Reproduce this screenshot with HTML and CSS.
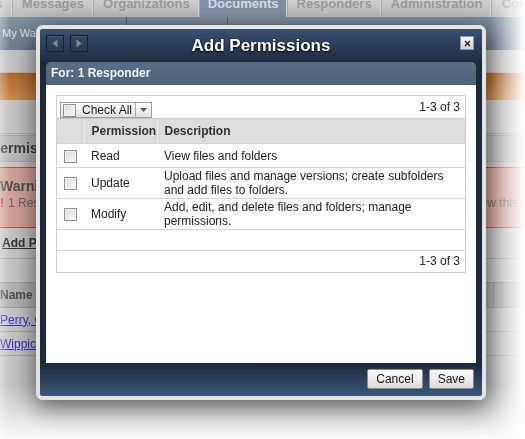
FILE: index.html
```html
<!DOCTYPE html>
<html lang="en">

<head>
    <meta charset="UTF-8" />
    <meta name="viewport" content="width=device-width, initial-scale=1.0" />
    <title>Add Permissions</title>
    <link rel="stylesheet" href="styles.css">
</head>

<body>
    <div class="screen">
        <!-- page behind the modal -->
        <div class="page">
            <div class="tabs">
                <span class="tab tab-first">Alerts</span>
                <span class="tab">Messages</span>
                <span class="tab">Organizations</span>
                <span class="tab tab-active">Documents</span>
                <span class="tab">Responders</span>
                <span class="tab">Administration</span>
                <span class="tab">Contacts</span>
            </div>
            <div class="subnav">
                <span class="subnav-item">My Watch List</span>
                <span class="subnav-item">Shared Folders</span>
                <span class="subnav-item"></span>
            </div>
            <div class="strip"></div>
            <div class="banner"></div>
            <div class="strip strip-tall"></div>
            <h2 class="section-title">Permissions</h2>
            <div class="warning">
                <p class="warning-title">Warning</p>
                <p class="warning-msg">
                    <span class="warning-icon">!</span>
                    <span class="warning-lead">1 Responder does not have permission to</span>
                    <span>view this folder.</span>
                </p>
            </div>
            <div class="add-row"><a class="add-link" href="#">Add Permissions</a></div>
            <table class="list">
                <tr>
                    <th class="list-name">Name</th>
                    <th></th>
                </tr>
                <tr>
                    <td><a href="#">Perry, Carol</a></td>
                    <td></td>
                </tr>
                <tr>
                    <td><a href="#">Wippich, Dan</a></td>
                    <td></td>
                </tr>
            </table>
        </div>

        <div class="shade"></div>

        <!-- modal -->
        <div class="dialog">
            <div class="dialog-frame">
                <div class="dialog-title">
                    <div class="nav-btns">
                        <button class="nav-btn" type="button">
                            <svg width="8" height="9" viewBox="0 0 8 9"><path d="M6.5 0.5 L1.5 4.5 L6.5 8.5 Z" fill="#7b8ca3" /></svg>
                        </button>
                        <button class="nav-btn" type="button">
                            <svg width="8" height="9" viewBox="0 0 8 9"><path d="M1.5 0.5 L6.5 4.5 L1.5 8.5 Z" fill="#7b8ca3" /></svg>
                        </button>
                    </div>
                    <h1>Add Permissions</h1>
                    <button class="close-btn" type="button">
                        <svg width="7" height="7" viewBox="0 0 7 7"><path d="M1 1 L6 6 M6 1 L1 6" stroke="#2b2b2b" stroke-width="1.5" /></svg>
                    </button>
                </div>

                <div class="panel">
                    <div class="panel-head">For: 1 Responder</div>
                    <div class="panel-body">
                        <div class="grid-box">
                            <div class="grid-toolbar">
                                <div class="check-all">
                                    <span class="cb"></span>
                                    <span class="check-all-label">Check All</span>
                                    <span class="check-all-menu">
                                        <svg width="7" height="4" viewBox="0 0 7 4"><path d="M0 0 H7 L3.5 4 Z" fill="#5a5a5a" /></svg>
                                    </span>
                                </div>
                                <span class="pager">1-3 of 3</span>
                            </div>
                            <table class="grid">
                                <thead>
                                    <tr>
                                        <th class="col-cb"></th>
                                        <th class="col-perm">Permission</th>
                                        <th>Description</th>
                                    </tr>
                                </thead>
                                <tbody>
                                    <tr>
                                        <td class="col-cb"><span class="cb"></span></td>
                                        <td>Read</td>
                                        <td>View files and folders</td>
                                    </tr>
                                    <tr>
                                        <td class="col-cb"><span class="cb"></span></td>
                                        <td>Update</td>
                                        <td>Upload files and manage versions; create subfolders and add files to folders.</td>
                                    </tr>
                                    <tr>
                                        <td class="col-cb"><span class="cb"></span></td>
                                        <td>Modify</td>
                                        <td>Add, edit, and delete files and folders; manage permissions.</td>
                                    </tr>
                                    <tr class="empty-row">
                                        <td colspan="3"></td>
                                    </tr>
                                </tbody>
                            </table>
                            <div class="grid-footer"><span class="pager">1-3 of 3</span></div>
                        </div>
                    </div>
                </div>

                <div class="dialog-footer">
                    <button class="btn" type="button">Cancel</button>
                    <button class="btn" type="button">Save</button>
                </div>
            </div>
        </div>
    </div>
</body>

</html>
```

FILE: styles.css
```css
* {
    box-sizing: border-box;
}

body {
    margin: 0;
    font-family: "Liberation Sans", Arial, sans-serif;
    font-size: 12px;
    color: #222;
    background: #fff;
    overflow: hidden;
}

p,
h1,
h2 {
    margin: 0;
}

.screen {
    position: relative;
    width: 525px;
    height: 439px;
    overflow: hidden;
}

/* ---- background page ---- */

.page {
    height: 100%;
    background: #c5c5c5;
    color: #555;
    filter: blur(0.4px);
}

.tabs {
    display: flex;
    height: 17px;
    overflow: hidden;
    background: linear-gradient(#d0d0d0, #bcbcbc);
}

.tab {
    flex: none;
    height: 26px;
    margin-top: -9px;
    padding: 0 9px;
    line-height: 26px;
    font-size: 13px;
    font-weight: bold;
    color: #9a9a9a;
    white-space: nowrap;
    border-right: 1px solid #a9a9a9;
    box-shadow: inset -1px 0 0 #dadada;
}

.tab-first {
    margin-left: -43px;
}

.tab-active {
    padding: 0 8px;
    background: #8190a3;
    color: #d5dbe2;
}

.subnav {
    display: flex;
    height: 33px;
    background: linear-gradient(#8290a2, #6f7c8e);
}

.subnav-item {
    width: 127px;
    padding: 10px 0 0 2px;
    font-size: 11px;
    color: #dfe3e8;
    white-space: nowrap;
    overflow: hidden;
    border-right: 1px solid #57636f;
}

.subnav-item + .subnav-item {
    width: 101px;
}

.subnav-item:last-child {
    flex: 1;
    border-right: none;
}

.strip {
    height: 23px;
    border-bottom: 1px solid #b2b2b2;
}

.strip-tall {
    height: 34px;
    border-bottom: 1px solid #a9a9a9;
}

.banner {
    height: 27px;
    background: linear-gradient(#b3672a, #c98b4e);
}

.section-title {
    height: 27px;
    margin-top: 1px;
    text-indent: -9px;
    line-height: 25px;
    font-size: 14px;
    color: #3c3c3c;
    background: #bababa;
    border-top: 1px solid #a8a8a8;
    border-bottom: 1px solid #a8a8a8;
}

.warning {
    height: 61px;
    margin-top: 5px;
    padding-top: 10px;
    background: #d1a399;
    border-top: 1px solid #c3483a;
    border-bottom: 1px solid #c3483a;
}

.warning-title {
    line-height: 17px;
    font-size: 14px;
    font-weight: bold;
    color: #4e4e4e;
}

.warning-msg {
    display: flex;
    line-height: 16px;
    color: #6a6a6a;
    white-space: nowrap;
}

.warning-msg span {
    flex: none;
}

.warning-icon {
    width: 8px;
    font-weight: bold;
    color: #d0321e;
}

.warning-lead {
    width: 464px;
}

.add-row {
    height: 31px;
    padding-left: 2px;
    line-height: 30px;
    border-bottom: 1px solid #a6a6a6;
}

.add-link {
    font-weight: bold;
    color: #333;
}

.list {
    width: 100%;
    margin-top: 23px;
    border-collapse: collapse;
}

.list th {
    height: 25px;
    padding: 0;
    text-align: left;
    color: #505050;
    background: #b3b3b3;
    border-top: 1px solid #a0a0a0;
    border-bottom: 1px solid #a0a0a0;
}

.list th + th {
    border-left: 1px solid #9a9a9a;
}

.list-name {
    width: 493px;
}

.list td {
    height: 24px;
    padding: 0;
    border-bottom: 1px solid #aaaaaa;
}

.list a {
    color: #3434c8;
}

/* fade at the picture edges */
.shade {
    position: absolute;
    inset: 0;
    pointer-events: none;
    background:
        linear-gradient(to bottom, rgba(255, 255, 255, 0) 385px, rgba(255, 255, 255, 0.93) 439px),
        linear-gradient(to right, rgba(255, 255, 255, 0) 490px, rgba(255, 255, 255, 0.95) 523px),
        linear-gradient(to right, rgba(255, 255, 255, 0.35), rgba(255, 255, 255, 0) 10px);
}

/* ---- dialog ---- */

.dialog {
    position: absolute;
    left: 36px;
    top: 25px;
    width: 450px;
    border: 4px solid #e3e3e3;
    border-radius: 7px;
    box-shadow: 0 6px 24px 2px rgba(0, 0, 0, 0.55);
}

.dialog-frame {
    padding: 0 6px;
    background: #1c2a3c;
    border-radius: 3px;
}

.dialog-title {
    display: grid;
    grid-template-columns: 1fr auto 1fr;
    height: 33px;
    margin: 0 -6px;
    padding: 0 6px;
    background: linear-gradient(#3a5172, #1d2c40);
    border-radius: 3px 3px 0 0;
}

.nav-btns {
    display: flex;
    gap: 6px;
    padding-top: 6px;
}

.nav-btn {
    display: flex;
    align-items: center;
    justify-content: center;
    width: 18px;
    height: 17px;
    padding: 0;
    border: 1px solid #162232;
    background: linear-gradient(#33475f, #293a51);
    box-shadow: inset 0 1px 0 rgba(255, 255, 255, 0.1);
}

.dialog-title h1 {
    line-height: 33px;
    font-size: 17px;
    font-weight: bold;
    color: #fff;
    text-shadow: 0 1px 2px #000, 0 0 1px #000;
}

.close-btn {
    justify-self: end;
    display: flex;
    align-items: center;
    justify-content: center;
    width: 14px;
    height: 14px;
    margin: 7px 2px 0 0;
    padding: 0;
    border: 1px solid #8d99a8;
    background: linear-gradient(#f6f6f6, #cdd1d6);
}

.panel-head {
    height: 23px;
    padding-left: 5px;
    line-height: 23px;
    font-weight: bold;
    color: #f1f4f8;
    background: linear-gradient(#5b6f88, #4e6179);
    border-radius: 5px 5px 0 0;
}

.panel-body {
    height: 278px;
    padding: 10px;
    background: #fff;
}

.grid-box {
    border: 1px solid #cfcfcf;
}

.grid-toolbar {
    display: flex;
    align-items: flex-end;
    justify-content: space-between;
    height: 22px;
    padding: 0 5px 0 3px;
}

.check-all {
    display: flex;
    align-items: center;
    height: 16px;
    border: 1px solid #9d9d9d;
    background: linear-gradient(#fdfdfd, #e2e2e2);
}

.check-all .cb {
    margin-left: 2px;
}

.check-all-label {
    padding: 0 3px 0 6px;
    line-height: 14px;
}

.check-all-menu {
    display: flex;
    align-items: center;
    justify-content: center;
    width: 16px;
    height: 100%;
    border-left: 1px solid #a9a9a9;
}

.pager {
    align-self: center;
    color: #222;
}

.cb {
    display: inline-block;
    width: 13px;
    height: 13px;
    vertical-align: middle;
    border: 1px solid #8f8f8f;
    background: linear-gradient(135deg, #d9d9d9, #fbfbfb);
    box-shadow: inset 0 0 0 1px #f3f3f3;
}

.grid {
    width: 100%;
    table-layout: fixed;
    border-collapse: collapse;
}

.grid th {
    height: 25px;
    padding: 0 7px;
    text-align: left;
    color: #333;
    background: #dcdcdc;
    border-top: 1px solid #c6c6c6;
}

.grid th + th {
    border-left: 1px solid #ececec;
}

.grid .col-cb {
    width: 27px;
    padding: 0;
    text-align: center;
}

.grid .col-perm {
    width: 73px;
}

.grid td {
    height: 24px;
    padding: 1px 7px;
    line-height: 14px;
    vertical-align: middle;
    border-top: 1px solid #d3d3d3;
}

.grid .empty-row td {
    height: 20px;
}

.grid-footer {
    display: flex;
    justify-content: flex-end;
    height: 22px;
    padding-right: 5px;
    line-height: 22px;
    border-top: 1px solid #d3d3d3;
}

.dialog-footer {
    display: flex;
    justify-content: flex-end;
    gap: 6px;
    height: 33px;
    margin: 0 -6px;
    padding: 6px 8px 0 6px;
    background: linear-gradient(#1c2a3c, #3b5779);
    border-radius: 0 0 3px 3px;
}

.btn {
    height: 20px;
    padding: 0 8px;
    font-family: inherit;
    font-size: 12px;
    color: #1a1a1a;
    border: 1px solid #8a8a8a;
    border-radius: 2px;
    background: linear-gradient(#fbfbfb, #dcdcdc);
    box-shadow: inset 0 1px 0 #fff;
}
```
